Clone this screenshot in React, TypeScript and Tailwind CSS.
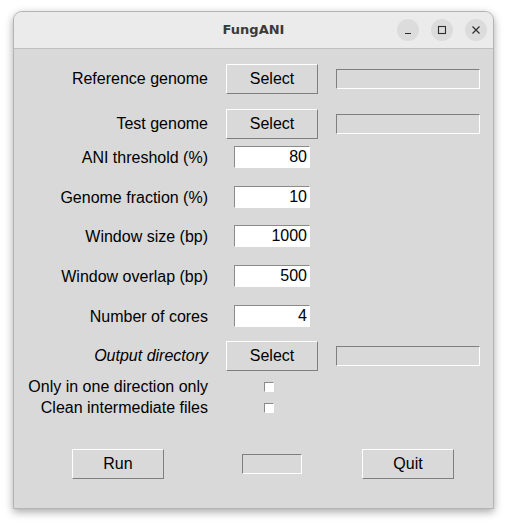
import React from 'react';

const FONT = { fontFamily: '"Liberation Sans", Arial, sans-serif' };

const TkButton: React.FC<{ label: string; className?: string }> = ({ label, className = '' }) => (
  <button
    className={`h-[30px] w-[92px] bg-[#d9d9d9] border border-t-white border-l-white border-b-[#7f7f7f] border-r-[#7f7f7f] text-[16px] text-black flex items-center justify-center ${className}`}
  >
    {label}
  </button>
);

const PathEntry: React.FC = () => (
  <div className="h-[20px] w-[144px] bg-[#d9d9d9] border border-t-[#7f7f7f] border-l-[#7f7f7f] border-b-white border-r-white" />
);

const NumEntry: React.FC<{ value: string }> = ({ value }) => (
  <div className="h-[22px] w-[76px] ml-[8px] bg-white border border-t-[#8a8a8a] border-l-[#8a8a8a] border-b-white border-r-white flex items-center justify-end pr-[2px] text-[16px] text-black">
    {value}
  </div>
);

const Label: React.FC<{ text: string; italic?: boolean }> = ({ text, italic }) => (
  <div className={`w-[194px] text-right text-[16px] text-black whitespace-nowrap ${italic ? 'italic' : ''}`}>{text}</div>
);

const FileRow: React.FC<{ label: string; italic?: boolean; className?: string }> = ({ label, italic, className = '' }) => (
  <div className={`flex items-center h-[30px] ${className}`}>
    <Label text={label} italic={italic} />
    <TkButton label="Select" className="ml-[18px]" />
    <div className="ml-[18px]">
      <PathEntry />
    </div>
  </div>
);

const NumRow: React.FC<{ label: string; value: string; className?: string }> = ({ label, value, className = '' }) => (
  <div className={`flex items-center h-[22px] ${className}`}>
    <div className="pt-[2px]">
      <Label text={label} />
    </div>
    <div className="ml-[18px] w-[92px]">
      <NumEntry value={value} />
    </div>
  </div>
);

const CheckRow: React.FC<{ label: string; className?: string }> = ({ label, className = '' }) => (
  <div className={`flex items-center h-[20px] ${className}`}>
    <Label text={label} />
    <div className="ml-[56px] w-[10px] h-[10px] bg-white border border-t-[#8a8a8a] border-l-[#8a8a8a] border-b-white border-r-white" />
  </div>
);

const WinButton: React.FC<{ children: React.ReactNode }> = ({ children }) => (
  <div className="w-[22px] h-[22px] rounded-full bg-[#dcdcdc] flex items-center justify-center text-[#2e2e2e]">
    {children}
  </div>
);

export default function App() {
  return (
    <div className="w-[508px] h-[526px] bg-white pt-[11px] pl-[13px]" style={FONT}>
      <div className="w-[481px] h-[498px] rounded-t-[9px] border border-[#b4b4b4] bg-[#d9d9d9] shadow-[0_3px_8px_rgba(0,0,0,0.35)] flex flex-col overflow-hidden">
        <div className="h-[37px] bg-[#ebebeb] border-b border-[#c0c0c0] flex items-center relative">
          <div
            className="absolute left-0 right-0 text-center text-[13px] font-bold text-[#3a3a3a]"
            style={{ fontFamily: '"DejaVu Sans", "Noto Sans", sans-serif' }}
          >
            FungANI
          </div>
          <div className="ml-auto mr-[6px] flex gap-[12px] relative">
            <WinButton>
              <svg width="10" height="10" viewBox="0 0 10 10"><path d="M2 8.5h6" stroke="currentColor" strokeWidth="1.2" /></svg>
            </WinButton>
            <WinButton>
              <svg width="10" height="10" viewBox="0 0 10 10"><rect x="1.5" y="1.5" width="7" height="7" fill="none" stroke="currentColor" strokeWidth="1.1" /></svg>
            </WinButton>
            <WinButton>
              <svg width="10" height="10" viewBox="0 0 10 10"><path d="M1.5 1.5l7 7M8.5 1.5l-7 7" stroke="currentColor" strokeWidth="1.2" /></svg>
            </WinButton>
          </div>
        </div>

        <div className="flex flex-col pt-[15px]">
          <FileRow label="Reference genome" />
          <FileRow label="Test genome" className="mt-[15px]" />
          <NumRow label="ANI threshold (%)" value="80" className="mt-[7px]" />
          <NumRow label="Genome fraction (%)" value="10" className="mt-[18px]" />
          <NumRow label="Window size (bp)" value="1000" className="mt-[17px]" />
          <NumRow label="Window overlap (bp)" value="500" className="mt-[18px]" />
          <NumRow label="Number of cores" value="4" className="mt-[18px]" />
          <FileRow label="Output directory" italic className="mt-[14px]" />
          <CheckRow label="Only in one direction only" className="mt-[6px]" />
          <CheckRow label="Clean intermediate files" className="mt-[1px]" />

          <div className="flex items-center h-[30px] mt-[31px]">
            <TkButton label="Run" className="ml-[58px]" />
            <div className="ml-[78px] h-[20px] w-[60px] bg-[#d9d9d9] border border-t-[#7f7f7f] border-l-[#7f7f7f] border-b-white border-r-white" />
            <TkButton label="Quit" className="ml-[60px]" />
          </div>
        </div>
      </div>
    </div>
  );
}
